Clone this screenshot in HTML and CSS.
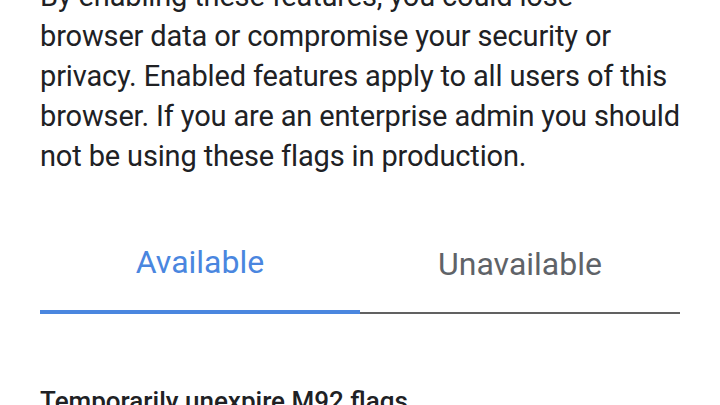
FILE: index.html
```html
<!DOCTYPE html>
<html>
<head>
<meta charset="utf-8">
<link rel="stylesheet" href="styles.css">
</head>
<body>
<div class="page">
  <p class="warning">By enabling these features, you could lose<br>browser data or compromise your security or<br>privacy. Enabled features apply to all users of this<br>browser. If you are an enterprise admin you should<br>not be using these flags in production.</p>
  <div class="tabs">
    <div class="tab active">Available</div>
    <div class="tab">Unavailable</div>
  </div>
  <div class="flag">
    <h3 class="flag-title">Temporarily unexpire M92 flags.</h3>
  </div>
</div>
</body>
</html>
```
FILE: styles.css
```css
html, body {
  margin: 0;
  padding: 0;
  background: #ffffff;
}
body {
  font-family: Roboto, "Liberation Sans", sans-serif;
  color: #202124;
  overflow: hidden;
}
.page {
  padding: 0 40px;
}
.warning {
  margin: -24px -30px 0 0;
  font-size: 29px;
  letter-spacing: -0.15px;
  line-height: 40px;
  color: #202124;
}
.tabs {
  display: flex;
  margin-top: 41px;
}
.tab {
  flex: 1;
  display: flex;
  align-items: center;
  justify-content: center;
  height: 97px;
  padding-top: 2px;
  padding-bottom: 4px;
  box-sizing: border-box;
  font-size: 32px;
  color: #5f6368;
  border-bottom: 2px solid #616161;
}
.tab.active {
  color: #4a86df;
  border-bottom: 4px solid #4a86df;
  padding-top: 0;
}
.flag {
  padding-top: 71px;
}
.flag-title {
  margin: 0;
  font-size: 26px;
  font-weight: 500;
  line-height: 32px;
  color: #202124;
}
```
